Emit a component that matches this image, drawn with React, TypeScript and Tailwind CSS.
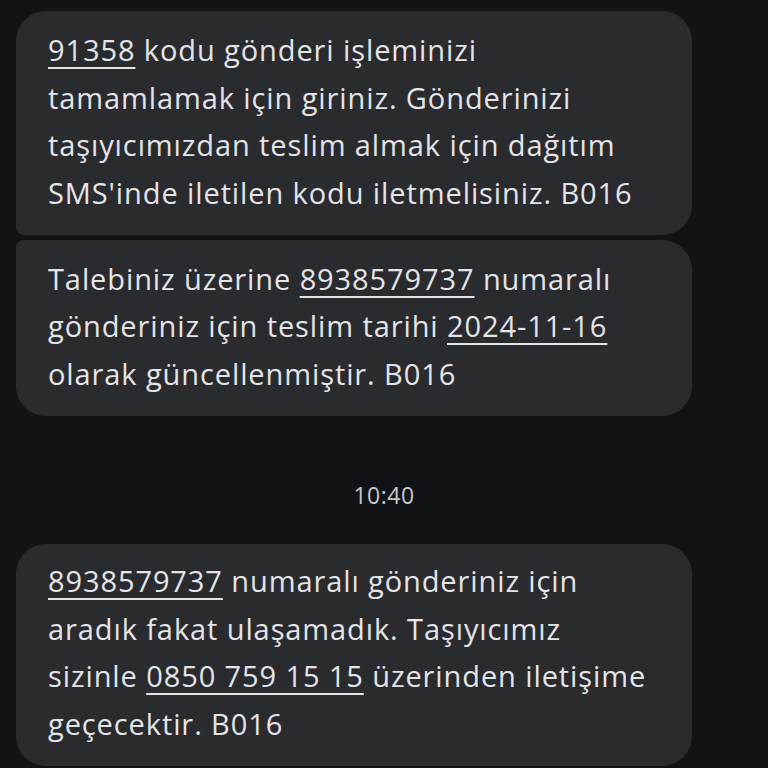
import React from "react";

type Part = string | { u: string };

const U = ({ children }: { children: React.ReactNode }) => (
  <span className="underline decoration-2 underline-offset-[6px]">{children}</span>
);

function Bubble({
  lines,
  corners,
  pad = "pt-[15px] pb-[18px]",
}: {
  lines: Part[][];
  corners: string;
  pad?: string;
}) {
  return (
    <div className={`ml-4 w-[676px] bg-[#2a2b2f] pl-8 pr-6 ${pad} ${corners}`}>
      {lines.map((line, i) => (
        <div key={i} className="whitespace-nowrap h-[47.7px] leading-[47.7px]">
          {line.map((p, j) =>
            typeof p === "string" ? <span key={j}>{p}</span> : <U key={j}>{p.u}</U>,
          )}
        </div>
      ))}
    </div>
  );
}

export default function App() {
  return (
    <div
      className="w-[768px] h-[768px] overflow-hidden bg-[#121317] text-[#e4e4e7] text-[29px] tracking-[0.9px] flex flex-col pt-[11px]"
      style={{ fontFamily: "'Open Sans', Roboto, sans-serif" }}
    >
      <Bubble
        corners="rounded-tl-[30px] rounded-tr-[30px] rounded-br-[30px] rounded-bl-[8px]"
        lines={[
          [{ u: "91358" }, " kodu gönderi işleminizi"],
          ["tamamlamak için giriniz. Gönderinizi"],
          ["taşıyıcımızdan teslim almak için dağıtım"],
          ["SMS'inde iletilen kodu iletmelisiniz. B016"],
        ]}
      />
      <div className="h-[5px] flex-none" />
      <Bubble
        corners="rounded-tl-[8px] rounded-tr-[30px] rounded-br-[30px] rounded-bl-[30px]"
        lines={[
          ["Talebiniz üzerine ", { u: "8938579737" }, " numaralı"],
          ["gönderiniz için teslim tarihi ", { u: "2024-11-16" }],
          ["olarak güncellenmiştir. B016"],
        ]}
      />
      <div className="h-[65px] flex-none" />
      <div className="text-center text-[23px] tracking-[0.5px] leading-[28px] text-[#c6c7cc]">10:40</div>
      <div className="h-[35px] flex-none" />
      <Bubble
        corners="rounded-[30px]"
        pad="pt-[13px] pb-[18px]"
        lines={[
          [{ u: "8938579737" }, " numaralı gönderiniz için"],
          ["aradık fakat ulaşamadık. Taşıyıcımız"],
          ["sizinle ", { u: "0850 759 15 15" }, " üzerinden iletişime"],
          ["geçecektir. B016"],
        ]}
      />
    </div>
  );
}
